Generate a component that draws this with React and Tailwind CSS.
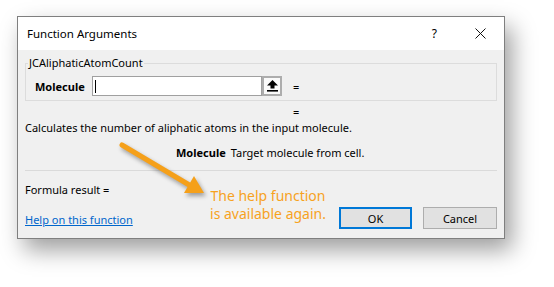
import React from 'react';

const font = { fontFamily: '"Noto Sans", "Open Sans", sans-serif' };

function UploadIcon() {
    return (
        <svg width="11" height="12" viewBox="0 0 11 12">
            <path d="M5.5 0 L11 5.5 L7.5 5.5 L7.5 8.5 L3.5 8.5 L3.5 5.5 L0 5.5 Z" fill="#000" />
            <rect x="0" y="10" width="11" height="1.6" fill="#000" />
        </svg>
    );
}

function CloseIcon() {
    return (
        <svg width="11" height="11" viewBox="0 0 11 11">
            <path d="M0.5 0.5 L10.5 10.5 M10.5 0.5 L0.5 10.5" stroke="#111" strokeWidth="1" />
        </svg>
    );
}

function Arrow() {
    return (
        <svg className="absolute left-0 top-0 pointer-events-none" width="554" height="287" style={{ filter: 'drop-shadow(2px 3px 2px rgba(0,0,0,0.35))' }}>
            <line x1="122" y1="145" x2="191" y2="186" stroke="#f5a01a" strokeWidth="5" strokeLinecap="round" />
            <polygon points="204,193 184,193 194,176" fill="#f5a01a" />
        </svg>
    );
}

export default function App() {
    return (
        <div className="relative w-[554px] h-[287px] bg-white overflow-hidden text-[11px] text-black" style={font}>
            <div className="absolute left-[17px] top-[16px] w-[488px] border border-[#7f7f7f] shadow-[7px_11px_22px_rgba(0,0,0,0.38)] bg-[#f0f0f0]">
                {/* title bar */}
                <div className="h-[33px] bg-white flex items-center pl-[9px]">
                    <span className="text-[11.5px] leading-none">Function Arguments</span>
                    <span className="ml-auto mr-[38px] text-[12px] leading-none">?</span>
                    <span className="mr-[18px] flex items-center"><CloseIcon /></span>
                </div>

                {/* body */}
                <div className="px-[7px] pb-[9px]">
                    <fieldset className="mt-[5px] border border-[#dcdcdc] px-[2px] pt-[5px] pb-[4px]">
                        <legend className="px-[1px] leading-[16px]">JCAliphaticAtomCount</legend>
                        <div className="flex items-center h-[20px] pl-[7px]">
                            <span className="w-[57px] font-bold leading-none">Molecule</span>
                            <div className="w-[170px] h-[20px] bg-white border border-[#a0a0a0] flex items-center pl-[1px]">
                                <div className="w-[1px] h-[13px] bg-black ml-[1px]" />
                            </div>
                            <div className="w-[20px] h-[20px] border-2 border-[#adadad] bg-[#fafafa] flex items-center justify-center">
                                <UploadIcon />
                            </div>
                            <span className="ml-[11px] leading-none">=</span>
                        </div>
                    </fieldset>

                    <div className="mt-[3px] h-[16px] leading-[16px] pl-[268px]">=</div>
                    <div className="h-[16px] leading-[16px]">Calculates the number of aliphatic atoms in the input molecule.</div>
                    <div className="mt-[9px] h-[16px] leading-[16px] pl-[151px] flex gap-[5px]">
                        <span className="font-bold">Molecule</span>
                        <span>Target molecule from cell.</span>
                    </div>
                    <div className="mt-[9px] h-px bg-[#dadada]" />
                    <div className="mt-[11px] h-[16px] leading-[16px]">Formula result =</div>
                    <div className="mt-[9px] h-[22px] flex items-center">
                        <span className="pt-[3px] text-[#0066cc] underline leading-[16px]">Help on this function</span>
                        <button className="ml-auto w-[73px] h-[22px] border-2 border-[#0078d7] bg-[#e1e1e1] leading-none">OK</button>
                        <button className="ml-[11px] w-[74px] h-[22px] border border-[#adadad] bg-[#e1e1e1] leading-none">Cancel</button>
                    </div>
                </div>
            </div>

            <Arrow />

            <div className="absolute left-[207px] top-[187px] w-[122px] text-center text-[14px] leading-[18px] text-[#f7a21e]">
                The help function<br />is available again.
            </div>
        </div>
    );
}
